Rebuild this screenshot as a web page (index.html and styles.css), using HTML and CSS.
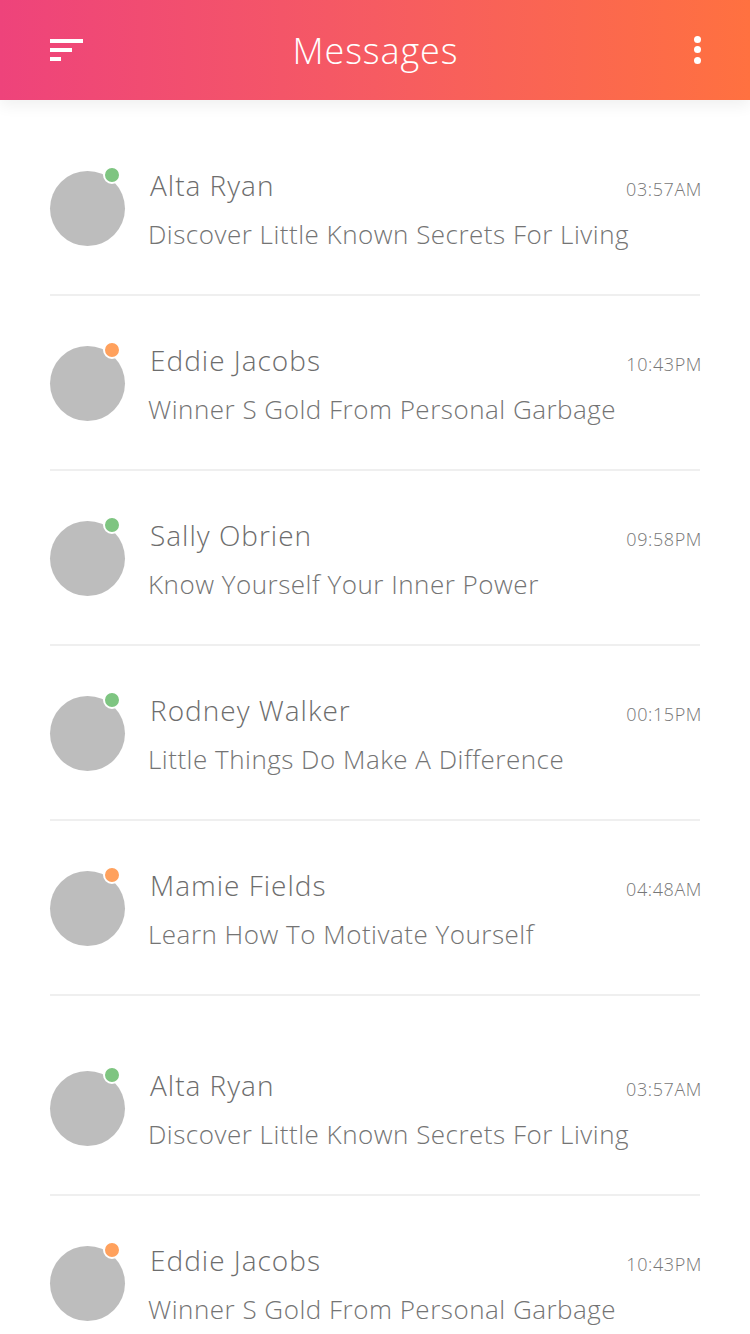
FILE: index.html
```html
<!DOCTYPE html>
<html>
<head>
<meta charset="utf-8">
<link rel="stylesheet" href="styles.css">
</head>
<body>
<header class="topbar">
  <div class="menu-icon"><span class="bar b1"></span><span class="bar b2"></span><span class="bar b3"></span></div>
  <h1 class="title">Messages</h1>
  <div class="kebab"><span></span><span></span><span></span></div>
</header>
<main class="list">
  <div class="row">
    <div class="avatar"><span class="status online"></span></div>
    <div class="body">
      <div class="line1"><span class="name">Alta Ryan</span><span class="time">03:57AM</span></div>
      <div class="msg">Discover Little Known Secrets For Living</div>
    </div>
  </div>
  <div class="row">
    <div class="avatar"><span class="status away"></span></div>
    <div class="body">
      <div class="line1"><span class="name">Eddie Jacobs</span><span class="time">10:43PM</span></div>
      <div class="msg">Winner S Gold From Personal Garbage</div>
    </div>
  </div>
  <div class="row">
    <div class="avatar"><span class="status online"></span></div>
    <div class="body">
      <div class="line1"><span class="name">Sally Obrien</span><span class="time">09:58PM</span></div>
      <div class="msg">Know Yourself Your Inner Power</div>
    </div>
  </div>
  <div class="row">
    <div class="avatar"><span class="status online"></span></div>
    <div class="body">
      <div class="line1"><span class="name">Rodney Walker</span><span class="time">00:15PM</span></div>
      <div class="msg">Little Things Do Make A Difference</div>
    </div>
  </div>
  <div class="row">
    <div class="avatar"><span class="status away"></span></div>
    <div class="body">
      <div class="line1"><span class="name">Mamie Fields</span><span class="time">04:48AM</span></div>
      <div class="msg">Learn How To Motivate Yourself</div>
    </div>
  </div>
  <div class="row row-gap">
    <div class="avatar"><span class="status online"></span></div>
    <div class="body">
      <div class="line1"><span class="name">Alta Ryan</span><span class="time">03:57AM</span></div>
      <div class="msg">Discover Little Known Secrets For Living</div>
    </div>
  </div>
  <div class="row">
    <div class="avatar"><span class="status away"></span></div>
    <div class="body">
      <div class="line1"><span class="name">Eddie Jacobs</span><span class="time">10:43PM</span></div>
      <div class="msg">Winner S Gold From Personal Garbage</div>
    </div>
  </div>
</main>
</body>
</html>
```
FILE: styles.css
```css
* { box-sizing: border-box; }
html, body { margin: 0; padding: 0; }
body {
  width: 750px;
  height: 1334px;
  overflow: hidden;
  background: #fff;
  font-family: "Open Sans", "Liberation Sans", sans-serif;
  font-weight: 300;
}
.topbar {
  position: relative;
  z-index: 2;
  height: 100px;
  display: flex;
  align-items: center;
  justify-content: space-between;
  padding: 0 49px 0 50px;
  background: linear-gradient(90deg, #ee437b 0%, #f65b62 50%, #ff7140 100%);
  box-shadow: 0 6px 14px rgba(0,0,0,0.06);
}
.menu-icon {
  width: 33px;
  display: flex;
  flex-direction: column;
  gap: 5px;
  margin-top: -1px;
}
.bar { display: block; height: 4px; background: #fff; }
.b1 { width: 33px; }
.b2 { width: 22px; }
.b3 { width: 11px; }
.title {
  margin: 0;
  color: #fff;
  font-size: 36px;
  font-weight: 300;
  letter-spacing: 0.9px;
}
.kebab {
  width: 33px;
  display: flex;
  flex-direction: column;
  align-items: flex-end;
  gap: 3.5px;
  margin-top: -1px;
}
.kebab span { width: 7px; height: 7px; border-radius: 50%; background: #fff; }
.list { padding: 21px 50px 0 50px; }
.row {
  display: flex;
  align-items: center;
  height: 175px;
  padding: 50px 0 48px 0;
  border-bottom: 2px solid #efefef;
}
.row-gap { height: 200px; padding-top: 75px; }
.avatar {
  position: relative;
  width: 75px;
  height: 75px;
  border-radius: 50%;
  background: #bdbdbd;
  flex: none;
}
.status {
  position: absolute;
  top: -5px;
  left: 53px;
  width: 18px;
  height: 18px;
  border-radius: 50%;
  border: 2px solid #fff;
}
.online { background: #7ec581; }
.away { background: #ffa15d; }
.body { flex: 1; margin-left: 23px; margin-top: 2px; }
.line1 {
  display: flex;
  justify-content: space-between;
  align-items: baseline;
  padding-left: 2px;
  margin-right: -2px;
}
.name { font-size: 28px; color: #6d6d6d; letter-spacing: 1px; line-height: 36px; }
.time { font-size: 18px; color: #777; letter-spacing: 0.6px; }
.msg { font-size: 26px; color: #747474; margin-top: 13px; letter-spacing: 0.5px; line-height: 36px; }
```
